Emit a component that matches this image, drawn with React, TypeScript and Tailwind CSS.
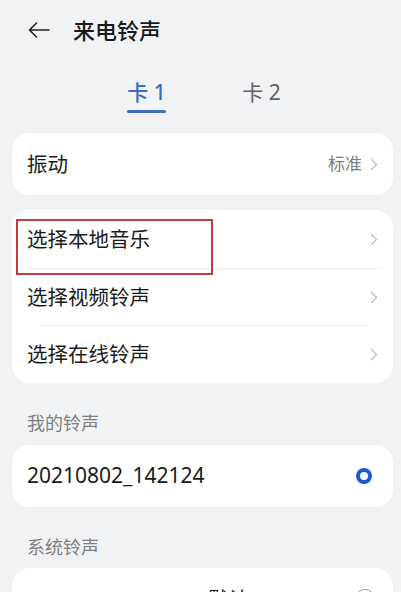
import React from "react";

const font = {
  fontFamily: '"Noto Sans", "Noto Sans CJK SC", sans-serif',
};

function Chevron() {
  return (
    <svg width="8" height="13" viewBox="0 0 8 13" fill="none">
      <path
        d="M1.5 1.5 L6.5 6.5 L1.5 11.5"
        stroke="#bdbdbd"
        strokeWidth="1.4"
        strokeLinecap="round"
        strokeLinejoin="round"
      />
    </svg>
  );
}

function LinkRow({ label, boxed }: { label: string; boxed?: boolean }) {
  return (
    <div className="relative flex h-[57px] items-center justify-between pl-[15px] pr-[15px]">
      <span className="text-[20.5px] text-[#1a1a1a]">{label}</span>
      <Chevron />
      {boxed && (
        <div className="absolute left-[4px] top-[8px] h-[56px] w-[197px] border-2 border-[#c23b3f]" />
      )}
    </div>
  );
}

export default function App() {
  return (
    <div
      className="h-[592px] w-[401px] overflow-hidden bg-[#f1f2f4]"
      style={font}
    >
      {/* header */}
      <div className="flex h-[60px] items-center pl-[28px]">
        <svg width="22" height="16" viewBox="0 0 22 16" fill="none">
          <path
            d="M21 8 H1.5 M8.5 1 L1.5 8 L8.5 15"
            stroke="#222"
            strokeWidth="1.6"
            strokeLinecap="round"
            strokeLinejoin="round"
          />
        </svg>
        <span className="ml-[23px] text-[22px] font-medium text-[#1a1a1a]">
          来电铃声
        </span>
      </div>

      {/* tabs */}
      <div className="mt-[20px] flex justify-center gap-[76px] pl-[7px]">
        <div className="flex w-[39px] flex-col items-center">
          <span className="whitespace-nowrap text-[21px] leading-[24px] font-medium text-[#3b6dbf]">
            卡 1
          </span>
          <div className="mt-[6px] h-[3px] w-[39px] rounded-full bg-[#3b6dbf]" />
        </div>
        <div className="flex w-[39px] flex-col items-center">
          <span className="whitespace-nowrap text-[21px] leading-[24px] text-[#606060]">
            卡 2
          </span>
        </div>
      </div>

      {/* vibration */}
      <div className="ml-[12px] mt-[20px] flex h-[62px] w-[381px] items-center justify-between rounded-[18px] bg-white pl-[15px] pr-[15px]">
        <span className="text-[20.5px] text-[#1a1a1a]">振动</span>
        <div className="flex items-center gap-[8px]">
          <span className="text-[17px] text-[#7d7d7d]">标准</span>
          <Chevron />
        </div>
      </div>

      {/* pick sources */}
      <div className="ml-[12px] mt-[15px] flex h-[173px] w-[381px] flex-col rounded-[18px] bg-white pt-[1px]">
        <LinkRow label="选择本地音乐" boxed />
        <div className="ml-[15px] mr-[12px] h-px bg-[#ebebeb]" />
        <LinkRow label="选择视频铃声" />
        <div className="ml-[28px] mr-[25px] h-px bg-[#ebebeb]" />
        <LinkRow label="选择在线铃声" />
      </div>

      {/* my ringtones */}
      <div className="ml-[27px] mt-[28px] text-[18px] leading-[24px] text-[#7f7f7f]">
        我的铃声
      </div>
      <div className="ml-[12px] mt-[10px] flex h-[62px] w-[381px] items-center justify-between rounded-[18px] bg-white pl-[15px] pr-[21px]">
        <span className="text-[21px] text-[#1a1a1a]">20210802_142124</span>
        <div className="h-[16px] w-[16px] rounded-full border-[4px] border-[#1f5ad4]" />
      </div>

      {/* system ringtones */}
      <div className="ml-[27px] mt-[28px] text-[18px] leading-[24px] text-[#7f7f7f]">
        系统铃声
      </div>
      <div className="ml-[12px] mt-[9px] flex h-[62px] w-[381px] items-center justify-between rounded-[18px] bg-white pl-[15px] pr-[18px]">
        <span className="text-[20.5px] text-[#1a1a1a]">Dream It Possible (默认)</span>
        <div className="h-[20px] w-[20px] rounded-full border-[1.5px] border-[#9a9a9a]" />
      </div>
    </div>
  );
}
